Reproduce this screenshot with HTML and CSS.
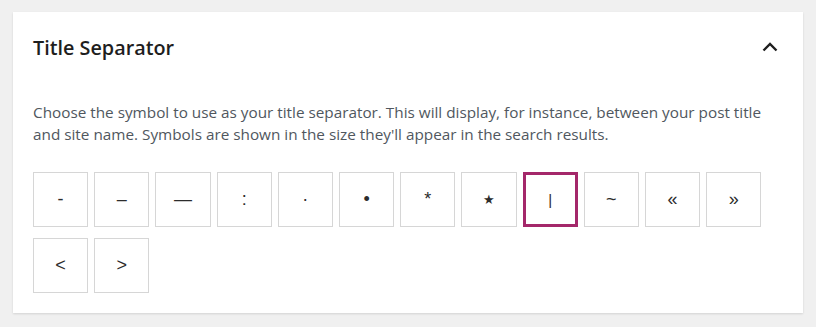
FILE: index.html
```html
<!DOCTYPE html>
<html lang="en">
<head>
    <meta charset="UTF-8">
    <meta name="viewport" content="width=device-width, initial-scale=1.0">
    <title>Title Separator</title>
    <link rel="stylesheet" href="styles.css">
</head>
<body>
    <section class="panel">
        <header class="panel-header">
            <h2>Title Separator</h2>
            <button class="toggle" aria-label="Collapse">
                <svg width="16" height="10" viewBox="0 0 16 10"><polyline points="1.5,8.5 8,2 14.5,8.5" fill="none" stroke="#1e1e1e" stroke-width="2.4"/></svg>
            </button>
        </header>
        <div class="panel-body">
            <p>Choose the symbol to use as your title separator. This will display, for instance, between your post title and site name. Symbols are shown in the size they'll appear in the search results.</p>
            <div class="separators">
                <label class="sep">-</label>
                <label class="sep">&ndash;</label>
                <label class="sep">&mdash;</label>
                <label class="sep">:</label>
                <label class="sep">&middot;</label>
                <label class="sep">&bull;</label>
                <label class="sep">*</label>
                <label class="sep"><span class="small-star">&#9733;</span></label>
                <label class="sep selected"><span class="pipe">|</span></label>
                <label class="sep">~</label>
                <label class="sep">&laquo;</label>
                <label class="sep">&raquo;</label>
                <label class="sep">&lt;</label>
                <label class="sep">&gt;</label>
            </div>
        </div>
    </section>
</body>
</html>
```

FILE: styles.css
```css
body {
    margin: 0;
    padding: 12px 13px;
    background: #f0f0f0;
    font-family: 'Open Sans', sans-serif;
    color: #1e1e1e;
}

.panel {
    background: #fff;
    box-shadow: 0 1px 2px rgba(0, 0, 0, 0.12);
    padding-bottom: 20px;
}

.panel-header {
    display: flex;
    align-items: center;
    justify-content: space-between;
    height: 70px;
    padding: 0 20px;
}

.panel-header h2 {
    margin: 0;
    font-size: 19.8px;
    font-weight: 600;
}

.toggle {
    border: none;
    background: none;
    padding: 0;
    margin-right: 5px;
    display: flex;
}

.panel-body {
    padding: 19px 20px 0;
}

.panel-body p {
    max-width: 740px;
    margin: 0 0 27px;
    font-size: 15.3px;
    line-height: 22px;
    color: #50575e;
}

.separators {
    display: flex;
    flex-wrap: wrap;
    gap: 11px 6px;
    width: 740px;
}

.sep {
    box-sizing: border-box;
    width: 55.2px;
    height: 55px;
    display: flex;
    align-items: center;
    justify-content: center;
    border: 1px solid #d6d6d6;
    font-family: 'Liberation Sans', Arial, sans-serif;
    font-size: 18px;
    color: #2c2c2c;
    cursor: pointer;
}

.sep.selected {
    border: 3px solid #a4286a;
}

.small-star {
    font-family: 'DejaVu Sans', sans-serif;
    font-size: 13px;
}

.pipe {
    font-size: 15px;
}
```
